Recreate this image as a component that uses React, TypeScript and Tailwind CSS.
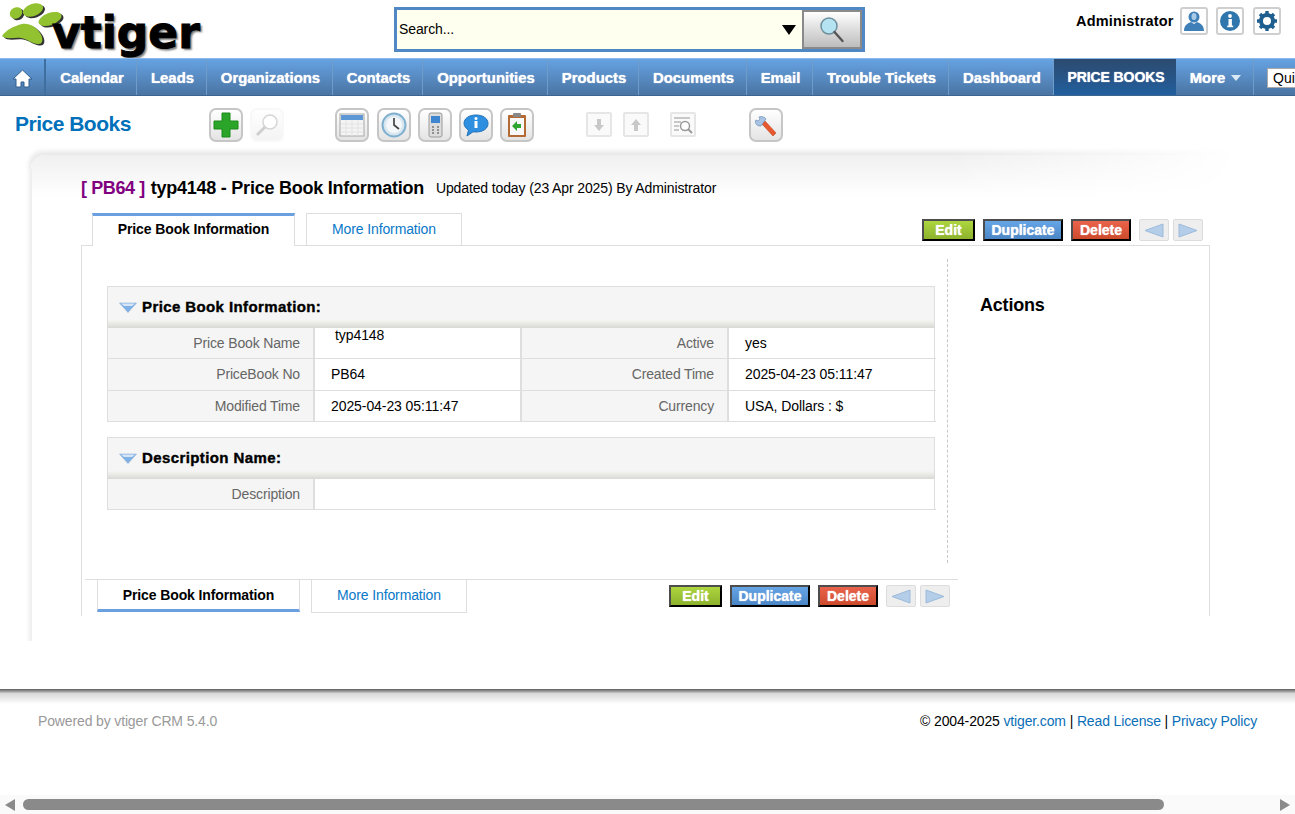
import type { ReactNode } from "react";

const navItems = [
  { label: "Calendar", width: "w-[91px]" },
  { label: "Leads", width: "w-[70px]" },
  { label: "Organizations", width: "w-[126px]" },
  { label: "Contacts", width: "w-[90px]" },
  { label: "Opportunities", width: "w-[125px]" },
  { label: "Products", width: "w-[91px]" },
  { label: "Documents", width: "w-[108px]" },
  { label: "Email", width: "w-[66px]" },
  { label: "Trouble Tickets", width: "w-[136px]" },
  { label: "Dashboard", width: "w-[105px]" },
];

function PawShape({ fill, dx = 0, dy = 0 }: { fill: string; dx?: number; dy?: number }) {
  return (
    <g fill={fill} transform={`translate(${dx} ${dy})`}>
      <ellipse cx="14" cy="11" rx="6.500" ry="5.500" transform="rotate(-30 14 11)" />
      <ellipse cx="31" cy="8" rx="10.500" ry="6" transform="rotate(-20 31 8)" />
      <ellipse cx="48" cy="17" rx="12" ry="6" transform="rotate(-20 48 17)" />
      <path d="M0 34C4 28 12 24 20 22 28 21 34 25 38 31 42 37 41 43 35 42 29 41 25 37 19 36 13 35 4 38 0 34z" />
    </g>
  );
}

function Paw() {
  return (
    <svg width="66" height="48" viewBox="0 0 66 48" className="shrink-0">
      <PawShape fill="#333" dx={2} dy={1.500} />
      <PawShape fill="#92c22f" />
    </svg>
  );
}

function HomeIcon() {
  return (
    <svg width="21" height="19" viewBox="0 0 21 19">
      <path d="M10.500 1 1 10h3v8h5v-5h3v5h5v-8h3z" fill="#fff" stroke="#2f5f8f" strokeWidth="1" />
    </svg>
  );
}

function ToolButton({ children, className = "", faded = false }: { children: ReactNode; className?: string; faded?: boolean }) {
  return (
    <div
      className={`flex h-[34px] w-[34px] shrink-0 items-center justify-center rounded-[7px] border-2 bg-gradient-to-b from-white to-[#e4e4e4] ${
        faded ? "border-[#eeeeee] opacity-40" : "border-[#c6c6c6]"
      } ${className}`}
    >
      {children}
    </div>
  );
}

function DisabledBox({ children, className = "" }: { children: ReactNode; className?: string }) {
  return (
    <div className={`flex h-[25px] w-[26px] shrink-0 items-center justify-center rounded-[2px] border-2 border-[#e6e6e6] bg-[#fafafa] ${className}`}>
      {children}
    </div>
  );
}

function Triangle() {
  return (
    <svg width="18" height="11" viewBox="0 0 18 11" className="shrink-0">
      <path d="M0.500 1h17L9 10.500z" fill="#7fb0e6" stroke="#8fb4dc" strokeWidth="0.600" />
      <path d="M2 1.500h14L13 4H5z" fill="#d6e6f8" />
    </svg>
  );
}

function ActionButtons({ className = "" }: { className?: string }) {
  const btn =
    "flex h-[22px] items-center justify-center border-2 border-t-[#4d4d4d] border-l-[#4d4d4d] border-r-black border-b-black text-[14px] font-bold text-white [text-shadow:0_0_1px_#fff]";
  return (
    <div className={`flex items-center ${className}`}>
      <div className={`${btn} w-[53px] bg-gradient-to-b from-[#add63f] to-[#8db22c]`}>Edit</div>
      <div className={`${btn} ml-[8px] w-[80px] bg-gradient-to-b from-[#66a5e6] to-[#4b86c6]`}>Duplicate</div>
      <div className={`${btn} ml-[8px] w-[60px] bg-gradient-to-b from-[#ea634c] to-[#cd4a2b]`}>Delete</div>
      <div className="ml-[8px] flex h-[22px] w-[30px] items-center justify-center rounded-[2px] border border-[#dcdcdc] bg-[#eeeeee]">
        <svg width="20" height="15" viewBox="0 0 20 15"><path d="M1 7.500 19 1v13z" fill="#b4cde8" stroke="#9dbbdc" /></svg>
      </div>
      <div className="ml-[4px] flex h-[22px] w-[30px] items-center justify-center rounded-[2px] border border-[#dcdcdc] bg-[#eeeeee]">
        <svg width="20" height="15" viewBox="0 0 20 15"><path d="M19 7.500 1 1v13z" fill="#b4cde8" stroke="#9dbbdc" /></svg>
      </div>
    </div>
  );
}

function SectionHeader({ title }: { title: string }) {
  return (
    <div className="flex h-[42px] items-center border border-b-0 border-[#dedede] bg-[linear-gradient(to_bottom,#f5f5f5_0,#f5f5f5_33px,#eeeeea_35px,#d8d8d4_41px)] pl-[11px]">
      <Triangle />
      <span className="ml-[5px] text-[15px] font-bold tracking-[0.4px] text-black [-webkit-text-stroke:0.4px_black]">{title}</span>
    </div>
  );
}

function Label({ children, h }: { children: ReactNode; h: string }) {
  return (
    <div className={`flex ${h} items-center justify-end border-r-2 border-b border-[#dedede] bg-[#f5f5f5] pr-[13px] text-[14px] tracking-[-0.15px] text-[#666666]`}>
      {children}
    </div>
  );
}

function Value({ children, h, right = false }: { children?: ReactNode; h: string; right?: boolean }) {
  return (
    <div className={`flex ${h} items-center border-b border-[#dedede] pl-[16px] text-[14px] tracking-[-0.08px] text-black ${right ? "" : "border-r-2"}`}>
      {children}
    </div>
  );
}

export default function App() {
  return (
    <div className="flex h-[814px] w-[1295px] flex-col overflow-hidden bg-white font-['Liberation_Sans',Arial,sans-serif] text-black">
      {/* top bar */}
      <div className="flex h-[58px] shrink-0">
        <div className="flex w-[394px] shrink-0 items-start pl-[2px] pt-[2px]">
          <Paw />
          <span className="-ml-[16px] mt-[7px] font-['DejaVu_Sans',sans-serif] text-[44px] leading-[48px] font-bold text-black [-webkit-text-stroke:1px_black] [text-shadow:2px_2px_2px_#777]">
            vtiger
          </span>
        </div>
        <div className="mt-[7px] flex h-[45px] w-[471px] shrink-0 items-center border-[3px] border-[#4f88c5] bg-[#ffffef] pl-[2px]">
          <span className="text-[14px] tracking-[-0.1px]">Search...</span>
          <svg width="14" height="10" viewBox="0 0 14 10" className="ml-auto"><path d="M0 0h14L7 10z" fill="#000" /></svg>
          <div className="ml-[6px] flex h-[39px] w-[60px] items-center justify-center border-2 border-[#8a8a8a] bg-gradient-to-b from-white to-[#bdbdbd]">
            <svg width="26" height="28" viewBox="0 0 26 28">
              <circle cx="10" cy="10" r="8" fill="#b5e3f2" stroke="#6f8f9c" strokeWidth="1.500" />
              <path d="m15.500 16 8 9" stroke="#555" strokeWidth="2.400" strokeLinecap="round" />
            </svg>
          </div>
        </div>
        <div className="ml-[211px] flex h-[42px] items-center">
          <span className="pt-[1px] text-[14.5px] font-bold tracking-[0.2px]">Administrator</span>
          <div className="ml-[6px] flex h-[28px] w-[28px] items-center justify-center rounded-[3px] border-2 border-[#cfcfcf]">
            <svg width="22" height="22" viewBox="0 0 22 22">
              <circle cx="11" cy="7" r="5.500" fill="#3f7fb8" />
              <ellipse cx="11" cy="6.500" rx="2.500" ry="3.500" fill="#a9cbe8" />
              <path d="M1 21c0-6 4-8 7-9l3 2 3-2c3 1 7 3 7 9z" fill="#3f7fb8" />
            </svg>
          </div>
          <div className="ml-[8px] flex h-[28px] w-[28px] items-center justify-center rounded-[3px] border-2 border-[#cfcfcf]">
            <svg width="22" height="22" viewBox="0 0 22 22">
              <circle cx="11" cy="11" r="10" fill="#2f76ad" />
              <rect x="9.500" y="9" width="3.400" height="8" fill="#fff" />
              <rect x="8.200" y="15.600" width="6" height="1.600" fill="#fff" />
              <circle cx="11" cy="6" r="1.900" fill="#fff" />
            </svg>
          </div>
          <div className="ml-[9px] flex h-[28px] w-[28px] items-center justify-center rounded-[3px] border-2 border-[#cfcfcf]">
            <svg width="22" height="22" viewBox="0 0 22 22">
              <circle cx="11" cy="11" r="6" fill="none" stroke="#1f5f8f" strokeWidth="4" />
              <path d="M11 1v4M11 17v4M1 11h4M17 11h4M4 4l3 3M15 15l3 3M18 4l-3 3M7 15l-3 3" stroke="#1f5f8f" strokeWidth="3.400" />
            </svg>
          </div>
        </div>
      </div>

      {/* main menu */}
      <nav className="flex h-[38px] shrink-0 items-stretch overflow-hidden border-t border-b border-t-[#8ab9ea] border-b-[#3d6590] bg-gradient-to-b from-[#66a3e3] to-[#4a74a3] text-[14.9px] font-bold text-white">
        <div className="flex w-[46px] shrink-0 items-center justify-center border-r-2 border-[#3f6f9f] pt-[2px]">
          <HomeIcon />
        </div>
        {navItems.map((item) => (
          <div key={item.label} className={`flex ${item.width} shrink-0 items-center justify-center border-r border-[#6f9cc9] pl-[2px] pt-[2px] [text-shadow:0_0_1px_#fff]`}>
            {item.label}
          </div>
        ))}
        <div className="flex w-[122px] shrink-0 items-center justify-center bg-gradient-to-b from-[#2b4a6e] to-[#215f9f] pl-[2px] text-[14px] tracking-[-0.1px] [text-shadow:0_0_1px_#fff]">
          PRICE BOOKS
        </div>
        <div className="flex w-[78px] shrink-0 items-center justify-center gap-[6px] border-r border-[#6f9cc9] pl-[2px] pt-[2px] [text-shadow:0_0_1px_#fff]">
          More
          <svg width="10" height="6" viewBox="0 0 10 6"><path d="M0 0h10L5 6z" fill="#dbe8f5" /></svg>
        </div>
        <div className="ml-[13px] mt-[9px] h-[20px] w-[80px] shrink-0 overflow-hidden border border-[#aaaaaa] bg-white pl-[5px] text-[14px] leading-[18px] font-normal whitespace-nowrap text-black">
          Quick Search
        </div>
      </nav>

      {/* module toolbar */}
      <div className="flex h-[59px] shrink-0 items-start">
        <h1 className="ml-[15px] mt-[14px] w-[194px] shrink-0 text-[21px] leading-[27px] font-bold tracking-[-0.5px] text-[#0070ba]">Price Books</h1>
        <ToolButton className="mt-[12px]">
          <svg width="26" height="26" viewBox="0 0 26 26">
            <path d="M9 1h8v8h8v8h-8v8H9v-8H1V9h8z" fill="#2aa52a" stroke="#1a8a1a" />
          </svg>
        </ToolButton>
        <ToolButton className="mt-[12px] ml-[7px]" faded>
          <svg width="26" height="26" viewBox="0 0 26 26">
            <circle cx="16" cy="10" r="7" fill="#fff" stroke="#999" strokeWidth="1.500" />
            <path d="m11 15-8 8" stroke="#888" strokeWidth="3" />
          </svg>
        </ToolButton>
        <ToolButton className="mt-[12px] ml-[51px]">
          <svg width="26" height="26" viewBox="0 0 26 26">
            <rect x="1" y="2" width="24" height="22" fill="#f4f4f4" stroke="#a8a8a8" />
            <rect x="2" y="3" width="22" height="5" fill="#5d97d6" />
            <path d="M2 12h22M2 16h22M2 20h22M7 8v16M13 8v16M19 8v16" stroke="#e2e2e2" />
          </svg>
        </ToolButton>
        <ToolButton className="mt-[12px] ml-[8px]">
          <svg width="26" height="26" viewBox="0 0 26 26">
            <circle cx="13" cy="13" r="11.500" fill="#d8e6ef" stroke="#7fb0cf" strokeWidth="2" />
            <circle cx="13" cy="13" r="8" fill="#f4f8fb" />
            <path d="M13 6v7l5 4" fill="none" stroke="#444" strokeWidth="1.700" />
          </svg>
        </ToolButton>
        <ToolButton className="mt-[12px] ml-[7px]">
          <svg width="26" height="26" viewBox="0 0 26 26">
            <rect x="7" y="1" width="13" height="24" rx="2" fill="#dcdcdc" stroke="#9a9a9a" />
            <rect x="9" y="4" width="9" height="7" fill="#3f86d0" />
            <path d="M10 15h2M15 15h2M10 18h2M15 18h2M10 21h2M15 21h2" stroke="#777" strokeWidth="1.300" />
          </svg>
        </ToolButton>
        <ToolButton className="mt-[12px] ml-[7px]">
          <svg width="26" height="26" viewBox="0 0 26 26">
            <path d="M13 3c7 0 12 3.500 12 8.500S20 20 13 20c-1 0-2 0-3-.2L4 24l1.500-6C3 16.500 1 14 1 11.500 1 6.500 6 3 13 3z" fill="#2e8fe0" stroke="#1e70b8" />
            <rect x="11.500" y="9" width="3" height="7" fill="#fff" />
            <circle cx="13" cy="6.500" r="1.500" fill="#fff" />
          </svg>
        </ToolButton>
        <ToolButton className="mt-[12px] ml-[7px]">
          <svg width="26" height="26" viewBox="0 0 26 26">
            <rect x="4" y="3" width="18" height="22" rx="1" fill="#b46a34" />
            <rect x="6" y="6" width="14" height="17" fill="#f8f8f8" />
            <rect x="9" y="1" width="8" height="4" rx="1" fill="#888" />
            <path d="M8 14l5-5v3h4v4h-4v3z" fill="#2ea52e" />
          </svg>
        </ToolButton>
        <DisabledBox className="mt-[16px] ml-[52px]">
          <svg width="14" height="14" viewBox="0 0 14 14"><path d="M5 1h4v6h3l-5 6-5-6h3z" fill="#c8c8c8" /></svg>
        </DisabledBox>
        <DisabledBox className="mt-[16px] ml-[11px]">
          <svg width="14" height="14" viewBox="0 0 14 14"><path d="M5 13h4V7h3L7 1 2 7h3z" fill="#c8c8c8" /></svg>
        </DisabledBox>
        <DisabledBox className="mt-[16px] ml-[21px]">
          <svg width="20" height="18" viewBox="0 0 20 18">
            <path d="M1 2h16M1 6h7M1 10h5M1 14h5" stroke="#b8b8b8" strokeWidth="1.500" />
            <circle cx="12" cy="10" r="4.500" fill="#fff" stroke="#999" strokeWidth="1.500" />
            <path d="m15 13 4 4" stroke="#999" strokeWidth="2" />
          </svg>
        </DisabledBox>
        <ToolButton className="mt-[12px] ml-[53px]">
          <svg width="26" height="26" viewBox="0 0 26 26">
            <path d="M12 9 23 21l-3 3L9 12z" fill="#e8582e" stroke="#b84420" strokeWidth="0.600" />
            <path d="M4 13c-2-2-2-4-1-5l2 1 2-2-1-2c3-1 6 0 7 2l-5 7c-1 0-3 0-4-1z" fill="#a9c3e2" stroke="#5f83b0" strokeWidth="0.600" />
          </svg>
        </ToolButton>
      </div>

      {/* detail panel */}
      <div className="relative ml-[31px] h-[486px] w-[1264px] shrink-0">
        <div className="absolute -top-[8px] -left-[8px] h-[120px] w-[1240px] [mask-image:linear-gradient(to_right,black_75%,transparent_98%)]">
          <div className="mt-[8px] ml-[8px] h-full rounded-tl-[14px] bg-gradient-to-b from-[#f0f0f0] to-white to-[35%] shadow-[-2px_-4px_5px_0_#e8e8e8]" />
        </div>
        <div className="absolute top-[14px] -left-[5px] h-[472px] w-[6px] bg-gradient-to-r from-white to-[#ececec]" />
        <div className="relative pl-[50px] pt-[21px]">
          <div className="flex h-[24px] items-center whitespace-nowrap">
            <span className="text-[18px] font-bold tracking-[-0.4px] text-[#800080]">[ PB64 ]</span>
            <span className="ml-[6px] text-[18px] font-bold tracking-[-0.25px]">typ4148 - Price Book Information</span>
            <span className="ml-[12px] text-[14px] tracking-[-0.12px]">Updated today (23 Apr 2025) By Administrator</span>
          </div>

          {/* top tabs */}
          <div className="mt-[13px] flex h-[33px] w-[1129px] items-end">
            <div className="ml-[11px] flex h-[33px] w-[203px] items-center justify-center border-x border-t-[3px] border-[#dedede] border-t-[#6a9fe0] bg-white pb-[3px] text-[14px] font-bold tracking-[-0.12px]">
              Price Book Information
            </div>
            <div className="ml-[11px] flex h-[33px] w-[156px] items-center justify-center border border-b-0 border-[#dedede] pb-[2px] text-[14px] tracking-[-0.12px] text-[#0a78c8]">
              More Information
            </div>
            <ActionButtons className="mb-[5px] ml-auto mr-[7px]" />
          </div>

          {/* content box */}
          <div className="-mt-px flex h-[371px] w-[1129px] border-x border-t border-[#dedede]">
            <div className="w-[867px] shrink-0">
              <div className="flex h-[333px] w-[867px]">
                <div className="mt-[13px] h-[304px] w-[866px] border-r border-dashed border-[#c8c8c8] pl-[25px] pt-[27px]">
                  <div className="w-[828px]">
                    <SectionHeader title="Price Book Information:" />
                    <div className="grid grid-cols-[207px_207px_207px_207px] border-x border-[#dedede]">
                      <Label h="h-[31px] pt-[1px]">Price Book Name</Label>
                      <Value h="h-[31px] pt-[1px]">
                        <span className="ml-[4px] -mt-[16px]">typ4148</span>
                      </Value>
                      <Label h="h-[31px] pt-[1px]">Active</Label>
                      <Value h="h-[31px] pt-[1px]" right>yes</Value>
                      <Label h="h-[32px]">PriceBook No</Label>
                      <Value h="h-[32px]">PB64</Value>
                      <Label h="h-[32px]">Created Time</Label>
                      <Value h="h-[32px]" right>2025-04-23 05:11:47</Value>
                      <Label h="h-[31px]">Modified Time</Label>
                      <Value h="h-[31px]">2025-04-23 05:11:47</Value>
                      <Label h="h-[31px]">Currency</Label>
                      <Value h="h-[31px]" right>USA, Dollars : $</Value>
                    </div>
                    <div className="mt-[15px]">
                      <SectionHeader title="Description Name:" />
                      <div className="grid grid-cols-[207px_621px] border-x border-[#dedede]">
                        <Label h="h-[31px]">Description</Label>
                        <Value h="h-[31px]" right />
                      </div>
                    </div>
                  </div>
                </div>
              </div>

              {/* bottom tabs */}
              <div className="ml-[3px] flex h-[37px] w-[873px] items-start border-t border-[#dedede]">
                <div className="ml-[12px] flex h-[32px] w-[203px] items-center justify-center border-l border-r border-b-[3px] border-[#dedede] border-b-[#6a9fe0] bg-white pt-[1px] text-[14px] font-bold tracking-[-0.12px]">
                  Price Book Information
                </div>
                <div className="ml-[11px] flex h-[33px] w-[156px] items-center justify-center border border-t-0 border-[#dedede] pb-[1px] text-[14px] tracking-[-0.12px] text-[#0a78c8]">
                  More Information
                </div>
                <ActionButtons className="mt-[5px] ml-auto mr-[8px]" />
              </div>
            </div>
            <div className="pl-[31px] pt-[48px] text-[18px] leading-[22px] font-bold tracking-[-0.2px]">Actions</div>
          </div>
        </div>
      </div>

      {/* footer */}
      <div className="mt-[48px] h-[15px] shrink-0 bg-gradient-to-b from-[#5f5f5f] via-[#d8d8d8] via-[30%] to-white" />
      <div className="flex shrink-0 justify-between pl-[38px] pr-[38px] pt-[9px] text-[14px] leading-[17px] tracking-[-0.14px]">
        <span className="text-[#999999]">Powered by vtiger CRM 5.4.0</span>
        <span>
          © 2004-2025 <span className="text-[#0a6fb8]">vtiger.com</span> | <span className="text-[#0a6fb8]">Read License</span> |{" "}
          <span className="text-[#0a6fb8]">Privacy Policy</span>
        </span>
      </div>

      {/* horizontal scrollbar */}
      <div className="mt-auto flex h-[19px] shrink-0 items-center bg-[#fafafa] px-[5px]">
        <svg width="10" height="12" viewBox="0 0 10 12"><path d="M0 6 10 0v12z" fill="#8a8a8a" /></svg>
        <div className="ml-[8px] h-[11px] w-[1141px] rounded-full bg-[#8a8a8a]" />
        <svg width="10" height="12" viewBox="0 0 10 12" className="ml-auto"><path d="M10 6 0 0v12z" fill="#8a8a8a" /></svg>
      </div>
    </div>
  );
}
